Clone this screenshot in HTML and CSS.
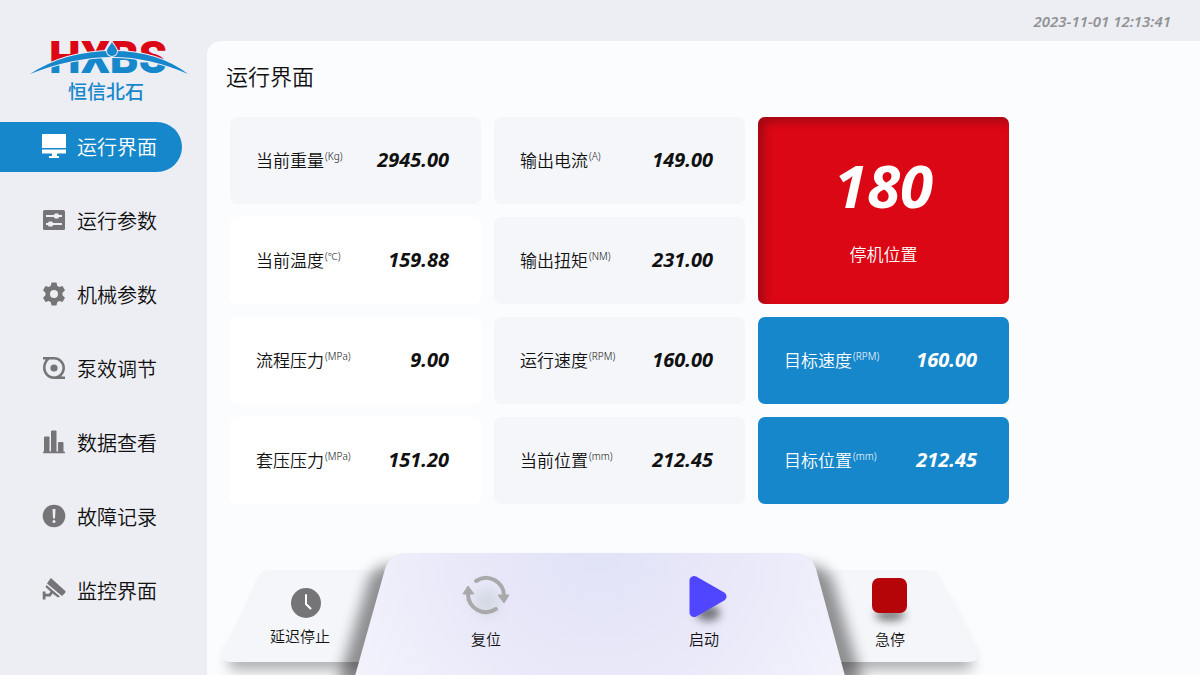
FILE: index.html
```
<!DOCTYPE html>
<html lang="zh-CN">

<head>
    <meta charset="UTF-8">
    <meta name="viewport" content="width=device-width, initial-scale=1">
    <title>运行界面</title>
    <link rel="stylesheet" href="styles.css">
</head>

<body>
    <aside class="sidebar">
        <svg class="logo" width="160" height="88" viewBox="0 -18 160 88">
            <defs>
                <!-- red above the arc, blue below it -->
                <pattern id="split" patternUnits="userSpaceOnUse" x="0" y="0" width="160" height="70">
                    <rect width="160" height="70" fill="#dc0715" />
                    <path d="M0 36Q42 17 84 17Q125 17 160 36V70H0Z" fill="#1787cb" />
                </pattern>
            </defs>
            <text class="logo-name" x="79" y="36" fill="url(#split)">HXBS</text>
            <path class="logo-arc" d="M1 37Q36 14 84 14Q129 14 159 37Q120 20 84 20Q44 20 1 37Z" />
            <path class="logo-drop" d="M83 5C85 9 88 11 88 14A5 5 0 0 1 78 14C78 11 81 9 83 5Z" />
            <text class="logo-cn" x="77" y="62">恒信北石</text>
        </svg>
        <nav class="menu">
            <a class="menu-item active" href="#run">
                <svg class="icon" width="24" height="24" viewBox="0 0 24 24">
                    <path d="M0 0H24V14H0ZM0 15.500H24V19.500H15V22H17V24H7V22H10V19.500H0Z" />
                </svg>
                运行界面
            </a>
            <a class="menu-item" href="#params">
                <svg class="icon" width="24" height="24" viewBox="0 0 24 24">
                    <rect x="1" y="2" width="22" height="20" rx="1.500" />
                    <path class="cut-line" d="M4 8H20M4 16H20" />
                    <rect class="cut" x="12" y="5.500" width="5" height="5" rx="1.500" />
                    <rect class="cut" x="6" y="13.500" width="5" height="5" rx="1.500" />
                </svg>
                运行参数
            </a>
            <a class="menu-item" href="#machine">
                <svg class="icon" width="24" height="24" viewBox="0 0 24 24">
                    <path fill-rule="evenodd"
                        d="M9.500 0.500h5l.7 3.300 2 1.200 3.300-1 2.500 4.300-2.500 2.400v2.600l2.500 2.400-2.500 4.300-3.300-1-2 1.200-.7 3.300h-5l-.7-3.300-2-1.200-3.300 1L1 15.700l2.500-2.400v-2.600L1 8.300 3.500 4l3.300 1 2-1.200ZM12 8a4 4 0 1 0 0 8a4 4 0 1 0 0-8Z" />
                </svg>
                机械参数
            </a>
            <a class="menu-item" href="#pump">
                <svg class="icon" width="24" height="24" viewBox="0 0 24 24">
                    <path class="line" d="M1 2.300H12A9.700 9.700 0 1 1 2.300 12Q2.300 6 6.500 2.700M23 21.700H12M17.500 20Q19 21 19 21.700" />
                    <circle cx="12" cy="12" r="3.600" />
                </svg>
                泵效调节
            </a>
            <a class="menu-item" href="#data">
                <svg class="icon" width="24" height="24" viewBox="0 0 24 24">
                    <rect x="2" y="6.500" width="5.500" height="16" rx="1" />
                    <rect x="9" y="0.500" width="5.500" height="22" rx="1" />
                    <rect x="16" y="12" width="5.500" height="10" rx="1" />
                    <rect x="1" y="21.500" width="22" height="1.800" rx=".9" />
                </svg>
                数据查看
            </a>
            <a class="menu-item" href="#faults">
                <svg class="icon" width="24" height="24" viewBox="0 0 24 24">
                    <circle cx="12" cy="12" r="11.300" />
                    <path class="cut" d="M10.500 5H13.500L13 14.500H11Z" />
                    <circle class="cut" cx="12" cy="17.500" r="1.500" />
                </svg>
                故障记录
            </a>
            <a class="menu-item" href="#monitor">
                <svg class="icon" width="24" height="24" viewBox="0 0 24 24">
                    <path d="M9.500 0.500L23.300 13Q24 14 23 15L20 18L5 5.500L8.200.7Q8.800 0 9.500.5Z" />
                    <path d="M4.500 7L18 18.500L16 19.500L10.500 15.500L8.500 18.500H3.500V21.500H.7V13.500H3.500V15.800H7L8.500 13.500L3.500 9Z" />
                </svg>
                监控界面
            </a>
        </nav>
    </aside>

    <header class="topbar">
        <time datetime="2023-11-01T12:13:41">2023-11-01 12:13:41</time>
    </header>

    <main class="main">
        <h1>运行界面</h1>

        <div class="cards">
            <div class="card">
                <span>当前重量<sup>(Kg)</sup></span>
                <b>2945.00</b>
            </div>
            <div class="card">
                <span>输出电流<sup>(A)</sup></span>
                <b>149.00</b>
            </div>
            <div class="card stop-card">
                <b>180</b>
                <span>停机位置</span>
            </div>
            <div class="card white">
                <span>当前温度<sup>(℃)</sup></span>
                <b>159.88</b>
            </div>
            <div class="card">
                <span>输出扭矩<sup>(NM)</sup></span>
                <b>231.00</b>
            </div>
            <div class="card white">
                <span>流程压力<sup>(MPa)</sup></span>
                <b>9.00</b>
            </div>
            <div class="card">
                <span>运行速度<sup>(RPM)</sup></span>
                <b>160.00</b>
            </div>
            <div class="card blue">
                <span>目标速度<sup>(RPM)</sup></span>
                <b>160.00</b>
            </div>
            <div class="card white">
                <span>套压压力<sup>(MPa)</sup></span>
                <b>151.20</b>
            </div>
            <div class="card">
                <span>当前位置<sup>(mm)</sup></span>
                <b>212.45</b>
            </div>
            <div class="card blue">
                <span>目标位置<sup>(mm)</sup></span>
                <b>212.45</b>
            </div>
        </div>

        <div class="console">
            <svg class="console-shape" width="790" height="135" viewBox="0 0 790 135">
                <defs>
                    <radialGradient id="panel" gradientUnits="userSpaceOnUse" cx="393" cy="0" r="300">
                        <stop offset="0" stop-color="#e0e2f7" />
                        <stop offset=".5" stop-color="#eae9f9" />
                        <stop offset="1" stop-color="#f4f4fd" />
                    </radialGradient>
                    <filter id="soft" x="-20%" y="-20%" width="140%" height="140%">
                        <feGaussianBlur stdDeviation="7" />
                    </filter>
                </defs>
                <path class="wing-shadow" filter="url(#soft)" d="M60 60L22 118Q18 130 30 130H758Q770 130 764 118L735 60Z" />
                <path class="wing" d="M62 30H722Q730 30 734 37L769 110Q774 122 761 122H24Q12 122 17 110L50 38Q54 30 62 30Z" />
                <path class="panel-shadow" filter="url(#soft)" d="M126 160L161 42Q166 25 186 25H600Q620 25 626 42L661 160Z" />
                <path fill="url(#panel)" d="M148 136L178 29Q183 13 200 13H586Q604 13 609 29L638 136Z" />
            </svg>
            <div class="controls">
                <div class="control-pair">
                    <button class="control delay" type="button">
                        <svg width="46" height="32" viewBox="0 0 46 32">
                            <circle class="grey" cx="29" cy="17" r="15" />
                            <path class="clock-hands" d="M29 9V18L33.500 22.500" />
                        </svg>
                        延迟停止
                    </button>
                    <button class="control" type="button">
                        <svg width="46" height="44" viewBox="0 0 46 44">
                            <circle class="reset-glow" cx="24" cy="28" r="13" />
                            <path class="reset-line" d="M13 7A18 18 0 0 1 41 22M33 35A18 18 0 0 1 5 20" />
                            <path class="reset-head" d="M35 21H46L41 29ZM0 20H11L5 12Z" />
                        </svg>
                        复位
                    </button>
                </div>
                <div class="control-pair">
                    <button class="control" type="button">
                        <svg width="46" height="44" viewBox="0 0 46 44">
                            <ellipse class="icon-shadow" cx="27" cy="39" rx="12" ry="8" />
                            <path class="play" d="M13 6.500V38.500L41 22.500Z" />
                        </svg>
                        启动
                    </button>
                    <button class="control" type="button">
                        <svg width="46" height="44" viewBox="0 0 46 44">
                            <ellipse class="icon-shadow" cx="23" cy="41" rx="15" ry="6" />
                            <rect class="stop" x="5" y="4" width="35" height="35" rx="7" />
                        </svg>
                        急停
                    </button>
                </div>
            </div>
        </div>
    </main>
</body>

</html>
```
FILE: styles.css
```
/* Layout */
* {
    box-sizing: border-box;
}

body {
    margin: 0;
    min-height: 100vh;
    display: grid;
    grid-template-columns: 207px 1fr;
    grid-template-rows: 41px 1fr;
    background: #edeef3;
    color: #111;
    font-family: "Noto Sans", "Noto Sans CJK SC", sans-serif;
    font-weight: 350;
}

.sidebar {
    grid-row: 1 / 3;
    padding-top: 19px;
}

.topbar {
    display: flex;
    align-items: center;
    justify-content: flex-end;
    padding-right: 29px;
    color: #929295;
    font-size: 15px;
    font-style: italic;
    font-weight: 600;
}

.main {
    display: flex;
    flex-direction: column;
    padding-top: 19px;
    background: #fbfcfe;
    border-top-left-radius: 14px;
}

h1 {
    margin: 0 0 25px 19px;
    font-size: 22px;
    font-weight: 350;
    line-height: 32px;
}

/* Logo */
.logo {
    display: block;
    margin-left: 29px;
}

.logo-name {
    font: 900 45px Roboto, sans-serif;
    text-anchor: middle;
}

.logo-cn {
    fill: #1787cb;
    font: 500 19px "Noto Sans CJK SC", sans-serif;
    text-anchor: middle;
}

.logo-arc,
.logo-drop {
    fill: #1787cb;
    stroke: #edeef3;
    stroke-width: 2;
    paint-order: stroke;
}

/* Menu */
.menu {
    display: flex;
    flex-direction: column;
    gap: 24px;
    margin: 15px 25px 0 0;
}

.menu-item {
    display: flex;
    align-items: center;
    gap: 11px;
    height: 50px;
    padding: 0 0 2px 42px;
    border-radius: 0 25px 25px 0;
    color: #111;
    font-size: 20px;
    text-decoration: none;
    white-space: nowrap;
}

.menu-item.active {
    background: #1787cb;
    color: #fff;
}

.icon {
    fill: #757577;
}

.active .icon {
    fill: #fff;
}

.icon .line {
    fill: none;
    stroke: #757577;
    stroke-width: 2.5;
}

.icon .cut {
    fill: #edeef3;
}

.icon .cut-line {
    stroke: #edeef3;
    stroke-width: 2;
}

/* Cards */
.cards {
    display: grid;
    grid-template-columns: repeat(3, minmax(0, 251px));
    grid-auto-rows: minmax(87px, auto);
    gap: 13px;
    padding: 0 23px;
}

.card {
    display: flex;
    align-items: center;
    justify-content: space-between;
    padding: 0 32px 2px 26px;
    border-radius: 7px;
    background: #f5f6fa;
    font-size: 17px;
    white-space: nowrap;
}

.card b {
    font-size: 20px;
    font-style: italic;
    font-weight: 700;
}

.card sup {
    margin-left: 1px;
    font-size: 10px;
    line-height: 0;
}

.card.white {
    background: #fff;
}

.card.blue {
    background: #1787cb;
    color: #fff;
}

.card.stop-card {
    grid-row: span 2;
    flex-direction: column;
    justify-content: center;
    gap: 20px;
    padding: 0 0 6px;
    background: #dc0715;
    box-shadow: inset 6px 5px 9px rgba(110, 10, 20, .5);
    color: #fff;
}

.stop-card b {
    font-size: 60px;
    line-height: 72px;
}

/* Control console */
.console {
    display: grid;
    margin-top: auto;
}

.console-shape,
.controls {
    grid-area: 1 / 1;
}

.wing {
    fill: #f5f6fa;
}

.wing-shadow {
    fill: #000;
    opacity: .3;
}

.panel-shadow {
    fill: #000;
    opacity: .42;
}

.controls {
    display: flex;
    justify-content: space-between;
    align-items: flex-end;
    width: 776px;
    padding-bottom: 25px;
}

.control-pair {
    display: flex;
    align-items: flex-end;
}

.control {
    display: flex;
    flex-direction: column;
    align-items: center;
    gap: 10px;
    width: 186px;
    padding: 0;
    border: 0;
    background: none;
    color: #111;
    font: inherit;
    font-size: 15px;
    line-height: 22px;
    cursor: pointer;
}

.control svg {
    overflow: visible;
}

.control.delay {
    gap: 7px;
    padding-bottom: 3px;
}

.grey {
    fill: #757577;
}

.clock-hands {
    fill: none;
    stroke: #fff;
    stroke-width: 2;
    stroke-linecap: round;
}

.reset-line {
    fill: none;
    stroke: #a9a9ab;
    stroke-width: 4;
    stroke-linecap: round;
}

.reset-head {
    fill: #a9a9ab;
    stroke: #a9a9ab;
    stroke-linejoin: round;
}

.reset-glow {
    fill: #d3d9e2;
    filter: blur(6px);
}

.icon-shadow {
    fill: rgba(0, 0, 0, .5);
    filter: blur(4px);
}

.play {
    fill: #5046ff;
    stroke: #5046ff;
    stroke-width: 9;
    stroke-linejoin: round;
}

.stop {
    fill: #b50509;
}
```
